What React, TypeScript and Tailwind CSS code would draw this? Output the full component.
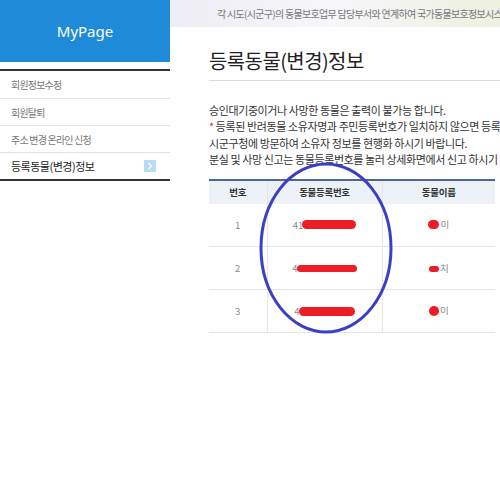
import React from 'react';

const kr = { fontFamily: '"Noto Sans CJK KR", "Noto Sans", sans-serif' };

const menu = [
  { label: '회원정보수정', active: false },
  { label: '회원탈퇴', active: false },
  { label: '주소 변경 온라인 신청', active: false },
  { label: '등록동물(변경)정보', active: true },
];

const rows = [
  { no: 1, prefix: '41', mark: 'w-[54px] h-[9px]', name: '이', blob: 'w-[11px] h-[9px]' },
  { no: 2, prefix: '4', mark: 'w-[60px] h-[7px]', name: '치', blob: 'w-[10px] h-[6px]' },
  { no: 3, prefix: '4', mark: 'w-[56px] h-[9px]', name: '이', blob: 'w-[10px] h-[10px]' },
];

function Sidebar() {
  return (
    <aside className="w-[170px] shrink-0">
      <div className="flex h-[62px] items-center justify-center bg-[#1f8ad7]">
        <span className="text-[15px] text-white" style={{ fontFamily: '"Noto Sans", sans-serif' }}>
          MyPage
        </span>
      </div>
      <ul className="mt-[7px] border-y-2 border-[#333]">
        {menu.map((m, i) => (
          <li
            key={m.label}
            className={`flex h-[27px] items-center justify-between pl-[11px] pr-[14px] ${
              i > 0 ? 'border-t border-[#e2e2e2]' : ''
            }`}
          >
            <span
              className={
                m.active
                  ? 'text-[11px] tracking-[-0.5px] text-[#222]'
                  : 'text-[10px] tracking-[-0.8px] text-[#777]'
              }
            >
              {m.label}
            </span>
            {m.active && (
              <span className="flex h-[12px] w-[12px] items-center justify-center bg-[#b9dcf3]">
                <svg width="6" height="8" viewBox="0 0 6 8" fill="none">
                  <path d="M1.5 1l3 3-3 3" stroke="#fff" strokeWidth="1.2" />
                </svg>
              </span>
            )}
          </li>
        ))}
      </ul>
    </aside>
  );
}

export default function App() {
  return (
    <div className="flex h-[500px] w-[500px] overflow-hidden bg-white" style={kr}>
      <Sidebar />
      <main className="relative min-w-0 flex-1 overflow-hidden">
        <div className="flex h-[27px] items-center whitespace-nowrap bg-gradient-to-r from-[#efedf5] via-[#f7f6fa] to-[#eef0df] pl-[47px] text-[10px] tracking-[-0.7px] text-[#777]">
          각 시도(시군구)의 동물보호업무 담당부서와 연계하여 국가동물보호정보시스템을 운영하고 있습니다.
        </div>
        <div className="pl-[39px]">
          <h1 className="mt-[20px] h-[34px] whitespace-nowrap border-b border-[#dcdcdc] text-[20px] leading-[28px] tracking-[-0.6px] text-[#222]">
            등록동물(변경)정보
          </h1>
          <div className="mt-[21px] whitespace-nowrap text-[11px] leading-[16.4px] tracking-[-0.4px] text-[#333]">
            <p>승인대기중이거나 사망한 동물은 출력이 불가능 합니다.</p>
            <p>
              <span className="text-[#e0302a]">*</span> 등록된 반려동물 소유자명과 주민등록번호가 일치하지 않으면 등록증 출력이 불가합니다.
            </p>
            <p>시군구청에 방문하여 소유자 정보를 현행화 하시기 바랍니다.</p>
            <p>분실 및 사망 신고는 동물등록번호를 눌러 상세화면에서 신고 하시기 바랍니다.</p>
          </div>
          <table className="mt-[11px] w-[286px] border-collapse border-t-2 border-[#4c6b8c] text-center">
            <thead>
              <tr className="h-[24px] bg-[#edf2f8] text-[9.5px] font-bold tracking-[-0.3px] text-[#333]">
                <th className="w-[58px] border-r border-[#e3e7ec] font-bold">번호</th>
                <th className="w-[115px] border-r border-[#e3e7ec] font-bold">동물등록번호</th>
                <th className="font-bold">동물이름</th>
              </tr>
            </thead>
            <tbody className="text-[9.5px] text-[#888]">
              {rows.map((r) => (
                <tr key={r.no} className="h-[43px] border-b border-[#e6e6e6]">
                  <td className="border-r border-[#e6e6e6]">{r.no}</td>
                  <td className="border-r border-[#e6e6e6]">
                    <span className="inline-flex items-center">
                      {r.prefix}
                      <span className={`-ml-[1px] inline-block rounded-full bg-[#ee1c25] ${r.mark}`} />
                    </span>
                  </td>
                  <td>
                    <span className="inline-flex items-center">
                      <span className={`inline-block rounded-full bg-[#ee1c25] ${r.blob}`} />
                      <span className="ml-[1px]">{r.name}</span>
                    </span>
                  </td>
                </tr>
              ))}
            </tbody>
          </table>
        </div>
        <svg
          className="pointer-events-none absolute left-[88px] top-[161px]"
          width="136"
          height="174"
          viewBox="0 0 136 174"
        >
          <ellipse cx="68" cy="87" rx="65" ry="84" fill="none" stroke="#3b3fc7" strokeWidth="3" />
        </svg>
      </main>
    </div>
  );
}
